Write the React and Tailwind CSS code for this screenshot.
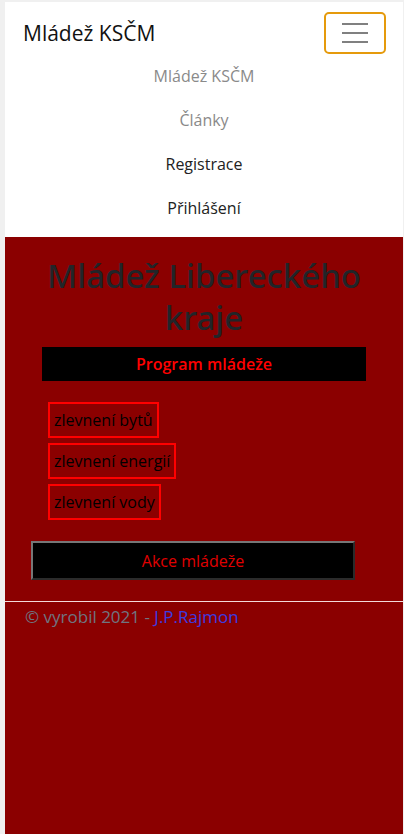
import React from "react";

const navLinks = [
  { label: "Mládež KSČM", muted: true },
  { label: "Články", muted: true },
  { label: "Registrace", muted: false },
  { label: "Přihlášení", muted: false },
];

const program = ["zlevnení bytů", "zlevnení energií", "zlevnení vody"];

export default function App() {
  return (
    <div className="min-h-[834px] bg-[#f0f0f0] pl-[5px] pr-[1px] pt-[2px] flex flex-col font-['Open_Sans',_'Noto_Sans',_sans-serif]">
      {/* Navbar */}
      <nav className="bg-white">
        <div className="flex items-center justify-between pl-[18px] pr-[17px] pt-[10px]">
          <span className="text-[21px] leading-[30px] text-[#111]">Mládež KSČM</span>
          <button className="w-[62px] h-[42px] border-2 border-[#e59a0c] rounded-[5px] flex flex-col items-center justify-center gap-[7px]">
            <span className="block w-[26px] h-[2px] bg-[#808080]" />
            <span className="block w-[26px] h-[2px] bg-[#808080]" />
            <span className="block w-[26px] h-[2px] bg-[#808080]" />
          </button>
        </div>
        <ul className="flex flex-col items-center pb-[7px]">
          {navLinks.map((l) => (
            <li
              key={l.label}
              className={`h-[44px] flex items-center text-[16px] ${
                l.muted ? "text-[#8a8a8a]" : "text-[#222]"
              }`}
            >
              {l.label}
            </li>
          ))}
        </ul>
      </nav>

      {/* Content */}
      <main className="flex-1 bg-[#8b0000]">
        <h1 className="pt-[18px] text-center text-[33px] leading-[42px] font-['Noto_Sans',_sans-serif] font-medium text-[#212529] px-4">
          Mládež Libereckého kraje
        </h1>
        <div className="mt-[8px] ml-[37px] w-[324px] h-[34px] bg-black flex items-center justify-center">
          <span className="text-[#ff0000] font-semibold text-[16px]">Program mládeže</span>
        </div>

        <ul className="mt-[21px] ml-[43px] flex flex-col items-start gap-[5px]">
          {program.map((p) => (
            <li
              key={p}
              className="border-2 border-[#ff0000] px-[4px] py-[4px] text-[16px] leading-[24px] text-black"
            >
              {p}
            </li>
          ))}
        </ul>

        <button className="mt-[21px] ml-[26px] w-[324px] h-[39px] bg-black border-2 border-t-[#767676] border-l-[#767676] border-b-[#2b2b2b] border-r-[#2b2b2b] text-[#e00000] text-[16px]">
          Akce mládeže
        </button>

        <div className="mt-[21px] h-px bg-[#f3dada]" />

        <footer className="pl-[20px] pt-[3px] text-[17px] leading-[24px] text-[#6f7580]">
          © vyrobil 2021 - <a className="text-[#3c3ce0]">J.P.Rajmon</a>
        </footer>
      </main>
    </div>
  );
}
